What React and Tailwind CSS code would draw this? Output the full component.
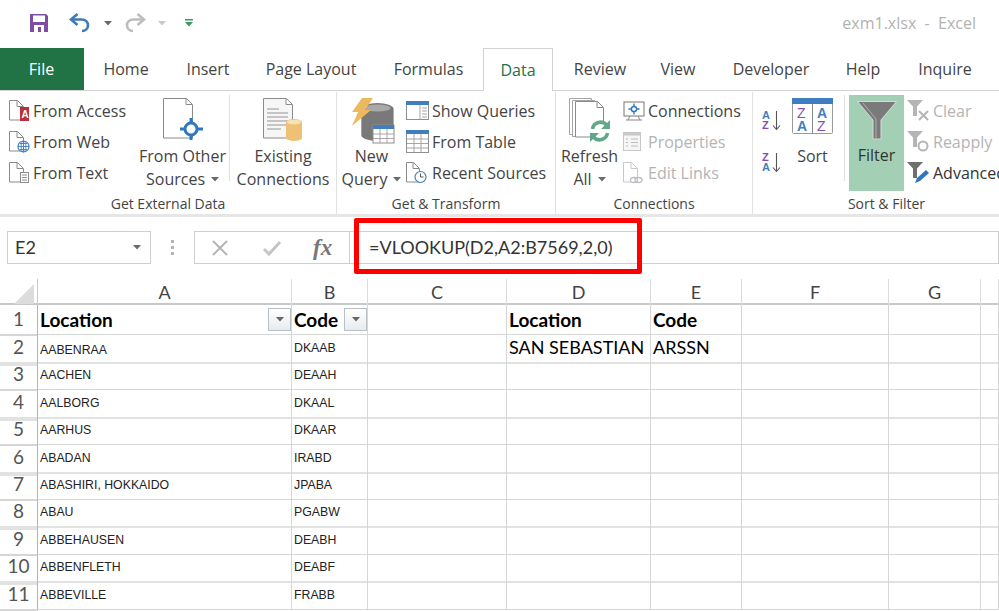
import React from "react";

const Caret = ({ color = "#6a6a6a", className = "" }) => (
  <svg width="8" height="5" viewBox="0 0 8 5" className={className}>
    <path d="M0 0h8L4 4.5z" fill={color} />
  </svg>
);

const SaveIcon = () => (
  <svg width="20" height="20" viewBox="0 0 20 20">
    <path d="M1 1h16l2 2v16H1z" fill="#7d4ea3" />
    <rect x="4" y="2.5" width="12" height="6.5" fill="#fff" />
    <rect x="5" y="12" width="10" height="7" fill="#fff" />
    <rect x="9" y="14" width="3" height="5" fill="#7d4ea3" />
  </svg>
);

const UndoIcon = ({ color, flip }) => (
  <svg width="22" height="20" viewBox="0 0 22 20" style={flip ? { transform: "scaleX(-1)" } : undefined}>
    <path d="M3 6.5h9.5c4 0 6.5 2.5 6.5 5.8S16.5 18 13 18" fill="none" stroke={color} strokeWidth="2.6" />
    <path d="M8.5 1L2 6.5 8.5 12" fill="none" stroke={color} strokeWidth="2.6" />
  </svg>
);

const Page = ({ x = 0, y = 0, w = 16, h = 21, stroke = "#8a8a8a", fill = "#fff" }) => (
  <path
    d={`M${x + 0.5} ${y + 0.5}h${w - 6}l6 6v${h - 6.5}h-${w}z M${x + w - 6} ${y + 0.5}v6h6`}
    fill={fill}
    stroke={stroke}
    strokeWidth="1"
  />
);

const AccessIcon = () => (
  <svg width="21" height="22" viewBox="0 0 21 22">
    <Page w={14} h={20} />
    <rect x="11" y="7" width="9" height="14" fill="#b7303a" />
    <text x="12.5" y="18" fontSize="10" fontWeight="700" fill="#fff" fontFamily="Liberation Sans">A</text>
  </svg>
);

const WebIcon = () => (
  <svg width="21" height="22" viewBox="0 0 21 22">
    <Page w={14} h={20} />
    <circle cx="14.5" cy="15.5" r="5.5" fill="#fff" stroke="#3e7fc1" strokeWidth="1.2" />
    <path d="M9 15.5h11M14.5 10v11M11 12.5h7M11 18.5h7" stroke="#3e7fc1" strokeWidth="0.9" />
    <ellipse cx="14.5" cy="15.5" rx="2.4" ry="5.5" fill="none" stroke="#3e7fc1" strokeWidth="0.9" />
  </svg>
);

const TextIcon = () => (
  <svg width="21" height="22" viewBox="0 0 21 22">
    <Page w={14} h={20} />
    <rect x="11.5" y="10.5" width="8" height="10" fill="#fff" stroke="#8a8a8a" />
    <path d="M13 13h5M13 15.5h5M13 18h5" stroke="#8a8a8a" />
  </svg>
);

const OtherSourcesIcon = () => (
  <svg width="42" height="42" viewBox="0 0 42 42">
    <Page x={1} y={0} w={29} h={40} />
    <circle cx="29" cy="31" r="6" fill="#fff" stroke="#2f78bf" strokeWidth="3" />
    <path d="M29 20v5M29 37v5M18 31h5M35 31h6" stroke="#2f78bf" strokeWidth="3" />
  </svg>
);

const ExistingIcon = () => (
  <svg width="42" height="44" viewBox="0 0 42 44">
    <Page x={1} y={0} w={29} h={40} fill="#f6f6f6" />
    <path d="M5 11h12M5 15h21M5 19h21M5 23h21M5 27h21M5 31h14" stroke="#b5b5b5" strokeWidth="1.4" />
    <path d="M24 24a8 3 0 0 1 16 0v16a8 3 0 0 1-16 0z" fill="#edc276" />
    <ellipse cx="32" cy="24" rx="7" ry="2.3" fill="#f7e2b8" />
  </svg>
);

const NewQueryIcon = () => (
  <svg width="48" height="46" viewBox="0 0 48 46">
    <path d="M14 10a17 6 0 0 1 34 0v26a17 6 0 0 1-34 0z" transform="translate(0 1) scale(.95 1)" fill="#797979" />
    <ellipse cx="29.5" cy="10" rx="13" ry="3.6" fill="#a9a9a9" />
    <path d="M14 0h11L17 12h6L4 28l6-14H4z" fill="#edb95e" />
    <rect x="25" y="27" width="21" height="18" fill="#fff" stroke="#8f8f8f" />
    <rect x="25" y="27" width="21" height="4" fill="#3f7fc1" />
    <path d="M32 31v14M39 31v14M25 36h21M25 40.5h21" stroke="#a5a5a5" />
  </svg>
);

const QueriesIcon = () => (
  <svg width="24" height="20" viewBox="0 0 24 20">
    <rect x="0.5" y="0.5" width="22" height="18" fill="#fff" stroke="#8f8f8f" />
    <rect x="0" y="0" width="23" height="4" fill="#3f7fc1" />
    <path d="M14 4v14M16 7h5M16 10h5M16 13h5M16 16h5" stroke="#a5a5a5" />
  </svg>
);

const TableIcon = () => (
  <svg width="24" height="23" viewBox="0 0 24 23">
    <rect x="0.5" y="0.5" width="22" height="22" fill="#fff" stroke="#8f8f8f" />
    <rect x="0" y="0" width="23" height="4" fill="#3f7fc1" />
    <path d="M8 4v18M15 4v18M1 9h21M1 13.5h21M1 18h21" stroke="#a5a5a5" />
  </svg>
);

const RecentIcon = () => (
  <svg width="22" height="22" viewBox="0 0 22 22">
    <Page w={13} h={20} />
    <circle cx="14.5" cy="15" r="5.5" fill="#fff" stroke="#3e7fc1" strokeWidth="1.2" />
    <path d="M14.5 11.5V15h3" fill="none" stroke="#555" />
  </svg>
);

const RefreshIcon = () => (
  <svg width="42" height="44" viewBox="0 0 42 44">
    <path d="M0.5 0.5h22v36H0.5z" fill="#fff" stroke="#a5a5a5" />
    <path d="M3.5 2.5h22v36H3.5z" fill="#fff" stroke="#a5a5a5" />
    <Page x={6} y={3} w={28} h={36} />
    <circle cx="31" cy="33" r="10.5" fill="#fff" />
    <path d="M23.5 31a8 8 0 0 1 14-4" fill="none" stroke="#5fa98a" strokeWidth="3.6" />
    <path d="M38.5 35a8 8 0 0 1-14 4" fill="none" stroke="#5fa98a" strokeWidth="3.6" />
    <path d="M41 22v9h-9zM21 44v-9h9z" fill="#5fa98a" />
  </svg>
);

const ConnectionsIcon = () => (
  <svg width="23" height="20" viewBox="0 0 23 20">
    <rect x="1" y="1" width="20" height="14" fill="#fff" stroke="#777" />
    <path d="M3 19h16M7 15l-2 4M15 15l2 4" stroke="#888" />
    <circle cx="11" cy="8" r="2.6" fill="none" stroke="#2f78bf" strokeWidth="1.5" />
    <path d="M11 2.5v3M11 10.5v3M5.5 8h3M13.5 8h3" stroke="#2f78bf" strokeWidth="1.3" />
  </svg>
);

const PropertiesIcon = () => (
  <svg width="19" height="20" viewBox="0 0 19 20">
    <rect x="0.5" y="0.5" width="17" height="18" fill="#f6f6f6" stroke="#c8c8c8" />
    <rect x="0" y="0" width="18" height="3.5" fill="#c8c8c8" />
    <path d="M8 7h7M8 10.5h7M8 14h7M3 7h2M3 10.5h2M3 14h2" stroke="#bcbcbc" />
  </svg>
);

const EditLinksIcon = () => (
  <svg width="21" height="22" viewBox="0 0 21 22">
    <Page w={14} h={20} stroke="#c8c8c8" />
    <ellipse cx="11" cy="18" rx="3.5" ry="2.5" fill="#fff" stroke="#c0bcc6" strokeWidth="1.3" />
    <ellipse cx="15.5" cy="18" rx="3.5" ry="2.5" fill="none" stroke="#c0bcc6" strokeWidth="1.3" />
  </svg>
);

const SortAzIcon = ({ desc }) => (
  <svg width="20" height="24" viewBox="0 0 20 24">
    <text x="0" y="11" fontSize="11" fontWeight="700" fontFamily="Liberation Sans" fill={desc ? "#8350b0" : "#3f7fc1"}>
      {desc ? "Z" : "A"}
    </text>
    <text x="0" y="21" fontSize="11" fontWeight="700" fontFamily="Liberation Sans" fill={desc ? "#3f7fc1" : "#8350b0"}>
      {desc ? "A" : "Z"}
    </text>
    <path d="M14.5 3v18M11 17.5l3.5 4 3.5-4" fill="none" stroke="#555" strokeWidth="1.1" />
  </svg>
);

const SortIcon = () => (
  <svg width="42" height="36" viewBox="0 0 42 36">
    <rect x="0.5" y="0.5" width="40" height="35" rx="1" fill="#fff" stroke="#9a9a9a" />
    <rect x="0" y="0" width="41" height="6" fill="#3f7fc1" />
    <path d="M20.5 6v30" stroke="#8a8a8a" />
    <text x="5" y="20" fontSize="14" fontFamily="Liberation Sans" fill="#8350b0">Z</text>
    <text x="5" y="33" fontSize="14" fontWeight="700" fontFamily="Liberation Sans" fill="#3f7fc1">A</text>
    <text x="25" y="20" fontSize="14" fontWeight="700" fontFamily="Liberation Sans" fill="#3f7fc1">A</text>
    <text x="25" y="33" fontSize="14" fontFamily="Liberation Sans" fill="#8350b0">Z</text>
  </svg>
);

const FunnelBig = () => (
  <svg width="40" height="39" viewBox="0 0 40 39">
    <path d="M0.5 0.5h39L24 19v19h-8V19z" fill="#7a7a7a" stroke="#d8d8d8" strokeWidth="1" />
    <path d="M6 2l13 16v19" fill="none" stroke="#bcbcbc" strokeWidth="0.8" />
  </svg>
);

const FunnelSmall = ({ color, children }) => (
  <svg width="23" height="23" viewBox="0 0 23 23">
    <path d="M0 1h16l-6 6.5V17H6V7.5z" fill={color} />
    {children}
  </svg>
);

const Small = ({ icon, label, muted, w = "w-[25px]" }) => (
  <div className={`flex items-center h-[31px] whitespace-nowrap ${muted ? "text-[#b4b4b4]" : ""}`}>
    <span className={`${w} flex justify-start shrink-0`}>{icon}</span>
    <span>{label}</span>
  </div>
);

const Large = ({ icon, children, className = "" }) => (
  <div className={`flex flex-col items-center shrink-0 ${className}`}>
    <div className="h-[50px] shrink-0 pt-[3px] flex items-start justify-center">{icon}</div>
    <div className="text-center leading-[23px] whitespace-nowrap">{children}</div>
  </div>
);

const Group = ({ label, width, labelClass = "", children, className = "" }) => (
  <div className={`flex flex-col shrink-0 border-r border-[#e2e2e2] h-full ${width}`}>
    <div className={`flex h-[101px] shrink-0 pt-[3px] ${className}`}>{children}</div>
    <div className={`text-center text-[14px] leading-[22px] text-[#444] ${labelClass}`}>{label}</div>
  </div>
);

const tabs = [
  { name: "Home", w: "w-[84px]" },
  { name: "Insert", w: "w-[80px]" },
  { name: "Page Layout", w: "w-[126px]" },
  { name: "Formulas", w: "w-[109px]" },
  { name: "Data", w: "w-[70px]", active: true },
  { name: "Review", w: "w-[94px]" },
  { name: "View", w: "w-[62px]" },
  { name: "Developer", w: "w-[124px]" },
  { name: "Help", w: "w-[60px]" },
  { name: "Inquire", w: "w-[104px]" },
];

const cols = ["A", "B", "C", "D", "E", "F", "G", ""];
const colTemplate = "grid grid-cols-[38px_254px_76px_139px_144px_91px_147px_92px_18px]";

const rows = [
  ["AABENRAA", "DKAAB"],
  ["AACHEN", "DEAAH"],
  ["AALBORG", "DKAAL"],
  ["AARHUS", "DKAAR"],
  ["ABADAN", "IRABD"],
  ["ABASHIRI, HOKKAIDO", "JPABA"],
  ["ABAU", "PGABW"],
  ["ABBEHAUSEN", "DEABH"],
  ["ABBENFLETH", "DEABF"],
  ["ABBEVILLE", "FRABB"],
];

const rowHeights = ["h-[27px]", "h-[28px]", "h-[27px]", "h-[28px]", "h-[27px]", "h-[27px]", "h-[28px]", "h-[27px]", "h-[28px]", "h-[27px]"];

const FilterBtn = () => (
  <span className="w-[23px] h-[23px] border border-[#b8c0c8] bg-gradient-to-b from-white to-[#e8ebee] flex items-center justify-center shrink-0">
    <Caret color="#666" />
  </span>
);

const cell = "border-r border-[#d6d6d6] flex items-center overflow-hidden whitespace-nowrap";
const smallCell = "pl-[2px] font-['Liberation_Sans',sans-serif] text-[12.3px]";

export default function App() {
  return (
    <div className="relative w-[999px] h-[611px] overflow-hidden bg-white font-['Open_Sans',sans-serif] text-[#444]">
      {/* title bar */}
      <div className="h-[48px] pb-[2px] flex items-center">
        <div className="ml-[29px]"><SaveIcon /></div>
        <div className="ml-[20px]"><UndoIcon color="#3e7ab8" /></div>
        <Caret className="ml-[13px]" />
        <div className="ml-[12px]"><UndoIcon color="#bdbdbd" flip /></div>
        <Caret className="ml-[12px]" color="#c8c8c8" />
        <svg width="8" height="8" viewBox="0 0 8 8" className="ml-[19px]">
          <path d="M0 0h8v1.5H0z M0 3h8L4 7.5z" fill="#3f9a62" />
        </svg>
        <div className="ml-auto mr-[23px] text-[16px] text-[#b2b2b2] whitespace-pre">exm1.xlsx  -  Excel</div>
      </div>

      {/* tabs */}
      <div className="h-[43px] flex border-b border-[#d2d2d2] text-[16px]">
        <div className="w-[84px] h-[42px] bg-[#217346] text-white flex items-center justify-center pr-[1px]">File</div>
        {tabs.map((t) =>
          t.active ? (
            <div key={t.name} className={`${t.w} h-[43px] bg-white border border-b-0 border-[#d2d2d2] text-[#217346] flex items-center justify-center`}>
              {t.name}
            </div>
          ) : (
            <div key={t.name} className={`${t.w} flex items-center justify-center`}>{t.name}</div>
          )
        )}
      </div>

      {/* ribbon */}
      <div className="h-[126px] flex text-[16px] pt-[1px] border-b-[3px] border-[#e6e6e6]">
        <Group label="Get External Data" width="w-[337px]">
          <div className="w-[136px] pl-[9px] shrink-0">
            <Small icon={<AccessIcon />} label="From Access" w="w-[24px]" />
            <Small icon={<WebIcon />} label="From Web" w="w-[24px]" />
            <Small icon={<TextIcon />} label="From Text" w="w-[24px]" />
          </div>
          <Large icon={<OtherSourcesIcon />} className="w-[94px] border-r border-[#e2e2e2] h-[86px]">
            From Other<br />
            <span className="inline-flex items-center gap-[6px]">Sources <Caret /></span>
          </Large>
          <Large icon={<ExistingIcon />} className="w-[106px]">
            Existing<br />Connections
          </Large>
        </Group>

        <Group label="Get & Transform" width="w-[219px]">
          <Large icon={<NewQueryIcon />} className="w-[69px]">
            New<br />
            <span className="inline-flex items-center gap-[6px]">Query <Caret /></span>
          </Large>
          <div className="shrink-0">
            <Small icon={<QueriesIcon />} label="Show Queries" w="w-[26px]" />
            <Small icon={<TableIcon />} label="From Table" w="w-[26px]" />
            <Small icon={<RecentIcon />} label="Recent Sources" w="w-[26px]" />
          </div>
        </Group>

        <Group label="Connections" width="w-[197px]">
          <Large icon={<RefreshIcon />} className="w-[67px]">
            Refresh<br />
            <span className="inline-flex items-center gap-[6px]">All <Caret /></span>
          </Large>
          <div className="shrink-0">
            <Small icon={<ConnectionsIcon />} label="Connections" />
            <Small icon={<PropertiesIcon />} label="Properties" muted />
            <Small icon={<EditLinksIcon />} label="Edit Links" muted />
          </div>
        </Group>

        <Group label="Sort & Filter" width="w-[247px] border-r-0" labelClass="pl-[20px]">
          <div className="w-[34px] pl-[9px] pt-[13px] flex flex-col gap-[18px] shrink-0">
            <SortAzIcon />
            <SortAzIcon desc />
          </div>
          <Large icon={<SortIcon />} className="w-[58px] border-r border-[#e2e2e2] h-[86px] pr-[6px]">
            Sort
          </Large>
          <div className="w-[55px] h-[96px] ml-[4px] bg-[#a3d0b4] text-[#333] flex flex-col items-center pt-[6px] shrink-0">
            <FunnelBig />
            <div className="mt-[4px] leading-[23px]">Filter</div>
          </div>
          <div className="ml-[3px] shrink-0">
            <Small
              muted
              w="w-[26px]"
              label="Clear"
              icon={<FunnelSmall color="#b5b5b5"><path d="M12 12l9 9M21 12l-9 9" stroke="#b5b5b5" strokeWidth="2" /></FunnelSmall>}
            />
            <Small
              muted
              w="w-[26px]"
              label="Reapply"
              icon={<FunnelSmall color="#b5b5b5"><circle cx="16" cy="16" r="4.5" fill="#fff" stroke="#b5b5b5" strokeWidth="2" /></FunnelSmall>}
            />
            <div className="text-[#333]">
              <Small
                w="w-[26px]"
                label="Advanced"
                icon={<FunnelSmall color="#6f6f6f"><path d="M8 22l2-5 9-8 3 3-9 8z" fill="#2f78bf" /></FunnelSmall>}
              />
            </div>
          </div>
        </Group>
      </div>

      {/* formula bar */}
      <div className="h-[62px] pt-[14px] flex items-start font-['Lato',sans-serif]">
        <div className="ml-[7px] w-[144px] h-[33px] border border-[#cfcfcf] flex items-center justify-between pl-[7px] pr-[9px] text-[#333] text-[18px] shrink-0">
          E2 <Caret />
        </div>
        <div className="w-[43px] h-[33px] flex flex-col items-center justify-center gap-[3px] shrink-0">
          <span className="w-[3px] h-[3px] bg-[#b5b5b5]" />
          <span className="w-[3px] h-[3px] bg-[#b5b5b5]" />
          <span className="w-[3px] h-[3px] bg-[#b5b5b5]" />
        </div>
        <div className="w-[156px] h-[33px] border border-[#cfcfcf] flex items-center shrink-0">
          <svg width="18" height="18" viewBox="0 0 18 18" className="ml-[16px]">
            <path d="M2 2l14 14M16 2L2 16" stroke="#b5b5b5" strokeWidth="2" />
          </svg>
          <svg width="20" height="18" viewBox="0 0 20 18" className="ml-[33px]">
            <path d="M2 10l5 5L18 3" fill="none" stroke="#c4c4c4" strokeWidth="3" />
          </svg>
          <span className="ml-[31px] font-['Liberation_Serif',serif] italic font-bold text-[23px] text-[#777] leading-none">fx</span>
        </div>
        <div className="flex-1 h-[33px] border border-l-0 border-[#cfcfcf] flex items-center pl-[19px] text-[18px] text-[#333] whitespace-nowrap">
          =VLOOKUP(D2,A2:B7569,2,0)
        </div>
      </div>

      {/* sheet */}
      <div className="font-['Lato',sans-serif] text-[#222]">
        <div className={`${colTemplate} h-[26px] border-b-2 border-[#c8c8c8] text-[#444] text-[18px]`}>
          <div className="border-r border-[#c8c8c8] flex items-end justify-end pr-[3px] pb-[2px]">
            <svg width="20" height="20" viewBox="0 0 20 20"><path d="M20 0v20H0z" fill="#dcdcdc" /></svg>
          </div>
          {cols.map((c, i) => (
            <div key={i} className="border-r border-[#dcdcdc] flex items-center justify-center">{c}</div>
          ))}
        </div>

        {/* header row */}
        <div className={`${colTemplate} h-[28px] [&>div]:border-b [&>div]:border-b-[#d6d6d6]`}>
          <div className="border-r border-[#b4b4b4] flex items-center justify-center text-[#555] text-[19px]">1</div>
          <div className={`${cell} justify-between pl-[2px] pt-[1px] text-[19px] font-bold text-black`}>
            Location <FilterBtn />
          </div>
          <div className={`${cell} justify-between pl-[2px] pt-[1px] text-[19px] font-bold text-black`}>
            Code <FilterBtn />
          </div>
          <div className={cell} />
          <div className={`${cell} pl-[2px] pt-[1px] text-[19px] font-bold text-black`}>Location</div>
          <div className={`${cell} pl-[2px] pt-[1px] text-[19px] font-bold text-black`}>Code</div>
          <div className={cell} />
          <div className={cell} />
          <div className={cell} />
          <div className={cell} />
        </div>

        {rows.map((r, i) => (
          <div
            key={r[0]}
            className={`${colTemplate} ${rowHeights[i]} ${
              i % 2 === 0 ? "[&>div]:border-b-2 [&>div]:border-b-[#e2e2e2]" : "[&>div]:border-b [&>div]:border-b-[#d6d6d6]"
            }`}
          >
            <div className="border-r border-[#b4b4b4] flex items-center justify-center text-[#555] text-[19px]">{i + 2}</div>
            <div className={`${cell} ${smallCell} ${i === 0 ? "pt-[5px]" : "pt-[1px]"}`}>{r[0]}</div>
            <div className={`${cell} ${smallCell} ${i === 0 ? "pt-[1px]" : "pt-[1px]"}`}>{r[1]}</div>
            <div className={cell} />
            <div className={`${cell} pl-[2px] text-[18px] text-black`}>{i === 0 ? "SAN SEBASTIAN" : ""}</div>
            <div className={`${cell} pl-[2px] text-[18px] text-black`}>{i === 0 ? "ARSSN" : ""}</div>
            <div className={cell} />
            <div className={cell} />
            <div className={cell} />
            <div className={cell} />
          </div>
        ))}
      </div>

      {/* red highlight around the formula */}
      <div className="absolute left-[354px] top-[218px] w-[288px] h-[56px] border-[5px] border-[#ff0000] rounded-[2px]" />
    </div>
  );
}
